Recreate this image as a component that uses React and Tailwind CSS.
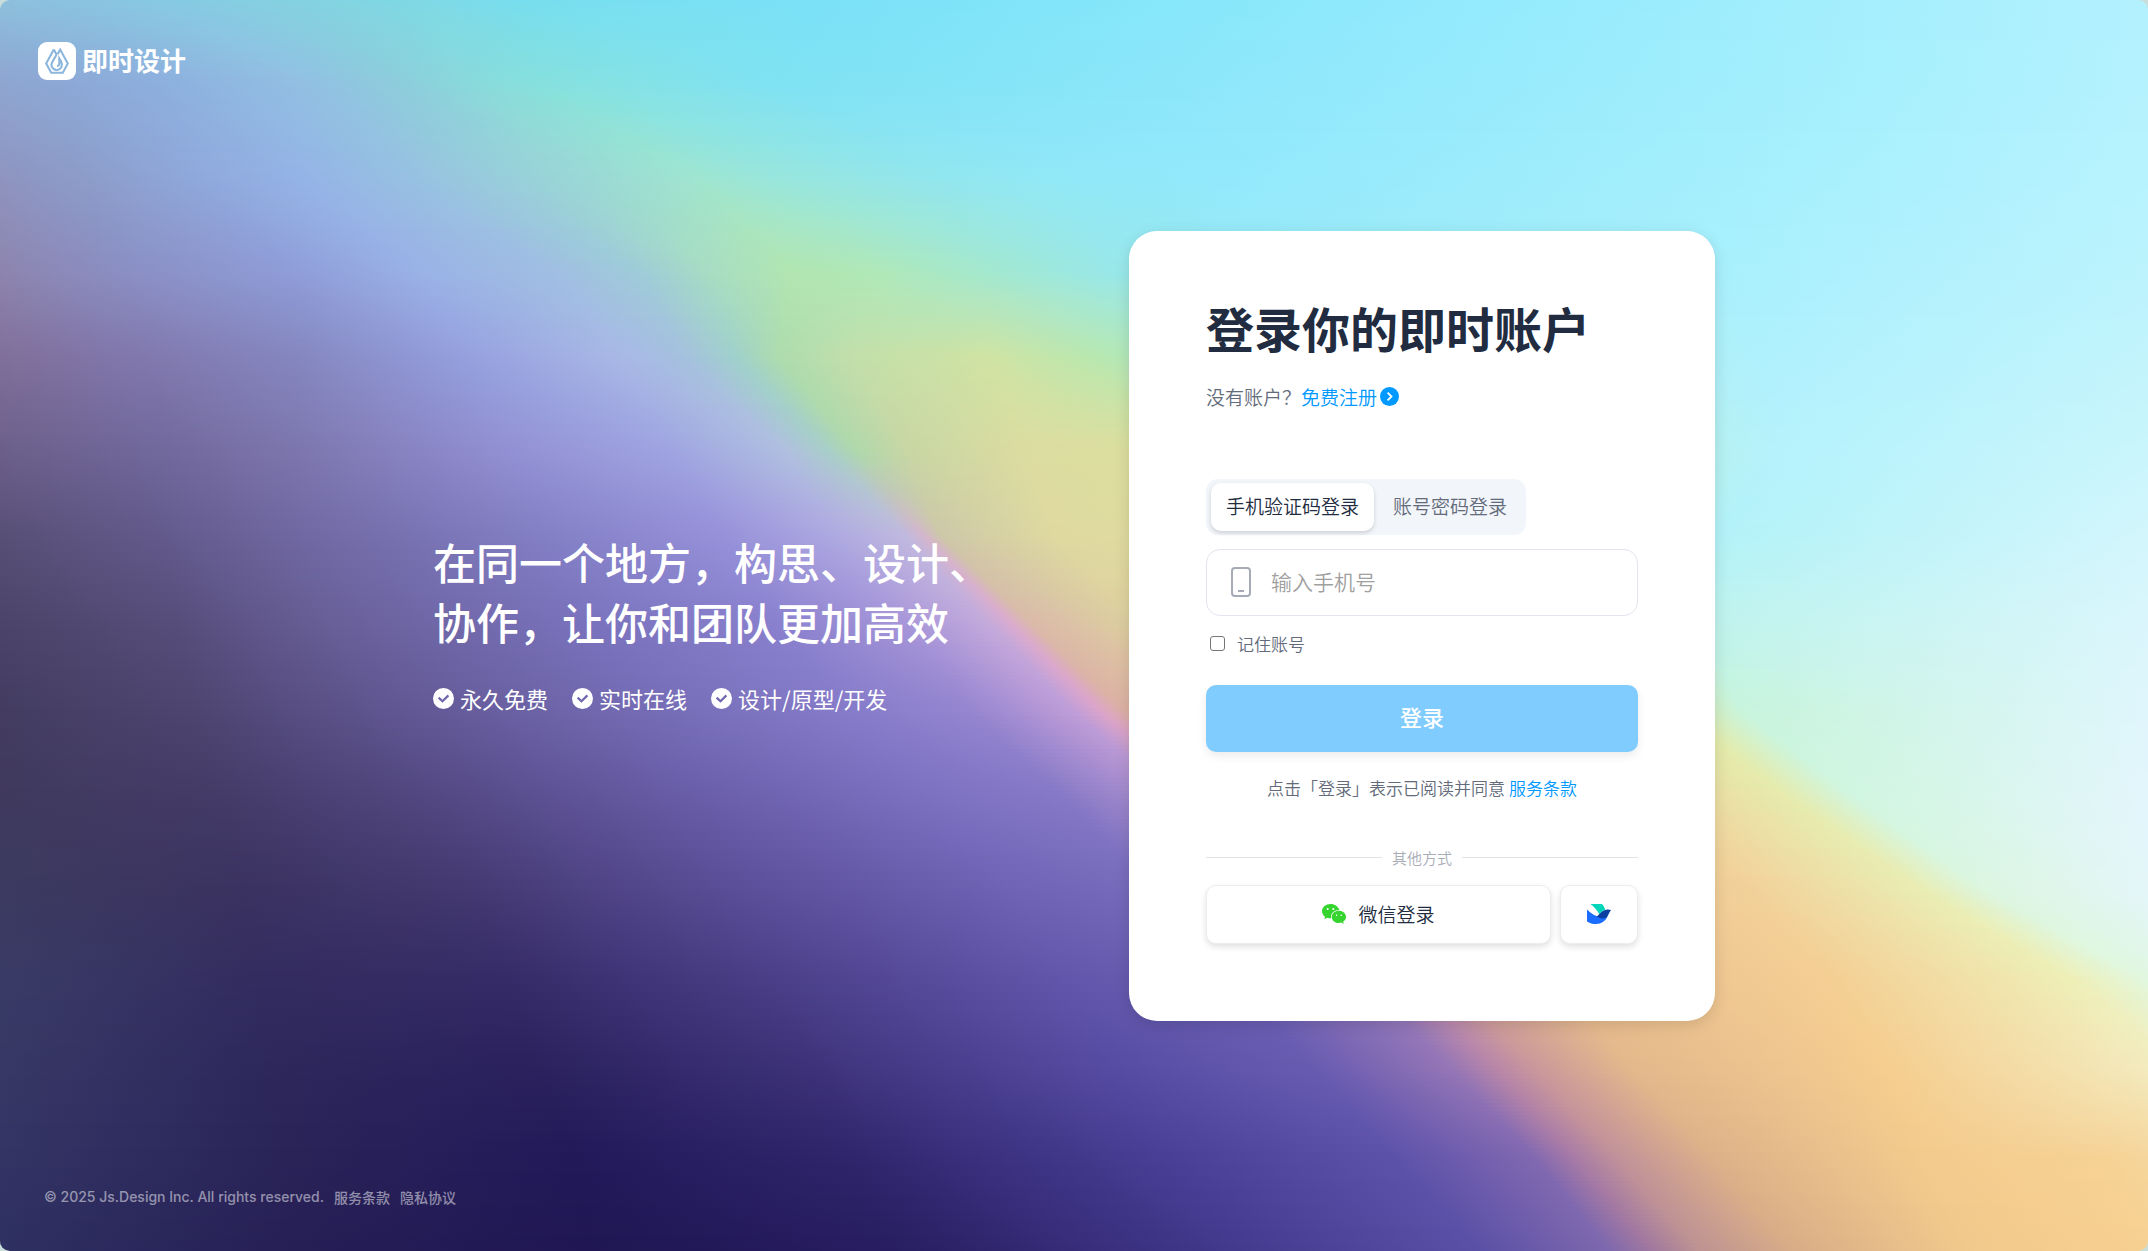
import React from "react";

/* Colour bands of the backdrop. Every row holds the same number of stops, so
   each stop traces a line through the picture from the top to the bottom. */
const ROWS = [
  [0, [[-60, "8fb9d8"], [0, "8dc0dc"], [60, "8ac4df"], [120, "86c9e2"], [190, "85cfe1"], [250, "82d4e2"], [310, "7ed9e5"], [380, "78dded"], [450, "78dff2"], [600, "7ae1f7"], [740, "81e4f9"], [880, "88e7fb"], [1250, "9dedfd"], [1568, "b3f1fe"]]],
  [60, [[-10, "8fa5d0"], [50, "8ca8d6"], [120, "8db0de"], [219, "92bfe3"], [258, "8fc6df"], [296, "8ccedb"], [340, "89d9db"], [390, "85e0dd"], [451, "84e2e5"], [567, "7fe2f3"], [700, "84e4f7"], [825, "8ae6fa"], [1260, "a0eefd"], [1568, "b4f2fe"]]],
  [130, [[0, "8e94bf"], [60, "8c9cc9"], [140, "8fa8db"], [219, "94b3e6"], [296, "97c0e2"], [373, "98cfda"], [451, "9bdcd4"], [509, "9fe5d0"], [567, "98e6dd"], [683, "92e6ee"], [790, "91e8f8"], [900, "93e9fb"], [1270, "a5effd"], [1568, "b7f3fe"]]],
  [200, [[0, "8d84ae"], [90, "8a8ec3"], [219, "8f9dd8"], [310, "9ab2e6"], [412, "a0bfe2"], [470, "9fccd8"], [520, "a8ddc2"], [580, "b2e5b0"], [644, "b0e8b8"], [721, "a4e8ce"], [810, "99e8e8"], [900, "98eaf6"], [1280, "aaf0fd"], [1568, "bcf3fd"]]],
  [260, [[0, "806f9a"], [110, "8179af"], [219, "8587c0"], [340, "95a0de"], [451, "a8b8e6"], [497, "a5c0df"], [536, "a0d0cc"], [567, "addcae"], [625, "c3dfaa"], [721, "cfe3a3"], [799, "b8e8b0"], [850, "aee8c4"], [1290, "aff1fd"], [1568, "c2f4fc"]]],
  [330, [[0, "6b5f8a"], [120, "71689c"], [219, "7d76ae"], [373, "9290d4"], [490, "9fa4e1"], [575, "b0bfe0"], [606, "a8cfc8"], [625, "aed8ac"], [663, "c8d6a4"], [750, "dcdca0"], [850, "dcdf9f"], [930, "c0e8b4"], [1300, "b5f2fc"], [1568, "caf5fc"]]],
  [390, [[0, "584f77"], [120, "635a8c"], [219, "7068a2"], [400, "8380c6"], [528, "9791da"], [605, "ada8e1"], [660, "c0b9df"], [674, "d4b6cc"], [686, "cdc8a8"], [770, "dfd9a0"], [920, "dfdd9f"], [1060, "cce8b0"], [1250, "b2f2f8"], [1568, "d2f6fc"]]],
  [455, [[0, "4b4369"], [130, "574d7b"], [240, "685f98"], [430, "7a72bd"], [570, "8a81ce"], [660, "a796d9"], [722, "c4aadb"], [738, "dbabcf"], [752, "dbb9aa"], [830, "ddd09f"], [1000, "e6d89f"], [1140, "dfe8a4"], [1240, "bff3ec"], [1568, "daf6fc"]]],
  [520, [[0, "433c60"], [140, "4d4470"], [280, "5f5590"], [460, "736ab3"], [620, "857bc9"], [710, "9585d0"], [785, "c09dd8"], [804, "dba4ca"], [822, "dcb0a4"], [910, "e4c89a"], [1120, "ecd59c"], [1225, "e2ebaa"], [1272, "c8f4dc"], [1568, "dff6fc"]]],
  [585, [[0, "3f395d"], [160, "433a67"], [320, "524781"], [500, "675ba6"], [680, "7b70c0"], [780, "8578c6"], [860, "b393d0"], [885, "d3a0bc"], [910, "dbae98"], [1000, "e8c294"], [1210, "f0d49c"], [1310, "e6ebae"], [1358, "d2f6e0"], [1568, "e3f6fc"]]],
  [650, [[0, "3c3a60"], [180, "3a3260"], [350, "443972"], [540, "5a4e99"], [740, "6e63b4"], [840, "776bbc"], [930, "a084c4"], [960, "c897b8"], [990, "d8a898"], [1080, "ebbf90"], [1280, "f2d199"], [1405, "e9edb4"], [1450, "dcf6e0"], [1580, "e5f6fb"]]],
  [715, [[0, "393b66"], [190, "332c5f"], [370, "352b67"], [570, "4b3f89"], [780, "6156ab"], [900, "6c60b4"], [995, "9078bc"], [1030, "bb8cb2"], [1060, "cf9f9a"], [1140, "e8bc8e"], [1340, "f4cf94"], [1515, "eeefb8"], [1565, "e2f7de"], [1660, "e5f6fb"]]],
  [780, [[0, "373865"], [200, "2d275c"], [390, "2a215d"], [590, "3d3279"], [820, "574ca4"], [960, "675bb1"], [1060, "9676b6"], [1092, "b886a8"], [1120, "c9979b"], [1190, "e3b88c"], [1380, "f5ce90"], [1580, "f3ecc0"], [1640, "e8f5d4"], [1740, "e5f6fb"]]],
  [845, [[0, "333464"], [210, "292358"], [420, "221959"], [620, "2f256c"], [860, "4a4098"], [1020, "5d52aa"], [1120, "8168b1"], [1150, "a87ba6"], [1180, "c0919a"], [1250, "dcb189"], [1400, "f3ca8d"], [1540, "f6d295"], [1660, "f4e0b0"], [1760, "f0f0c8"]]],
  [913, [[0, "2e3062"], [210, "261f56"], [430, "1f1653"], [650, "271d60"], [900, "43398d"], [1080, "5a50a6"], [1175, "7e68ae"], [1208, "a2799f"], [1240, "bd9292"], [1310, "d8ad87"], [1440, "f2c98c"], [1560, "f6d091"], [1690, "f5d8a0"], [1780, "f3ebc6"]]],
];

const STRIPS = 304;
const channels = (hex) => [0, 2, 4].map((i) => parseInt(hex.slice(i, i + 2), 16));

function stopsAt(y) {
  let i = 0;
  while (i < ROWS.length - 2 && y > ROWS[i + 1][0]) i += 1;
  const [y0, a] = ROWS[i];
  const [y1, b] = ROWS[i + 1];
  const t = (y - y0) / (y1 - y0);
  return a.map(([x, colour], k) => {
    const from = channels(colour);
    const to = channels(b[k][1]);
    const mix = from.map((v, c) => Math.round(v + (to[c] - v) * t));
    return { x: x + (b[k][0] - x) * t, colour: `rgb(${mix.join(",")})` };
  });
}

function Backdrop() {
  const height = 913 / STRIPS;
  const strips = Array.from({ length: STRIPS }, (_, i) => ({ y: i * height, stops: stopsAt((i + 0.5) * height) }));
  return (
    <svg className="absolute inset-0 h-full w-full" viewBox="0 0 1568 913" preserveAspectRatio="none" aria-hidden="true">
      <defs>
        {strips.map(({ stops }, i) => (
          <linearGradient key={i} id={`band-${i}`} gradientUnits="userSpaceOnUse" x1="-100" x2="1800" y1="0" y2="0">
            {stops.map((s, k) => (
              <stop key={k} offset={(s.x + 100) / 1900} stopColor={s.colour} />
            ))}
          </linearGradient>
        ))}
      </defs>
      {strips.map(({ y }, i) => (
        <rect key={i} x="0" y={y} width="1568" height={height + 1} fill={`url(#band-${i})`} />
      ))}
    </svg>
  );
}

function Logo() {
  return (
    <a href="#home" className="flex items-center gap-1.5 text-white">
      <svg className="size-[38px]" viewBox="0 0 38 38" aria-hidden="true">
        <rect width="38" height="38" rx="9" fill="#fff" />
        <g fill="none" stroke="#8bb6dd" strokeWidth="2.100" strokeLinejoin="miter">
          <path d="M15.800 7.600 8.200 21.600l5 9.200h11.600l5-9.200L22.200 7.600l-2.700 4.600" />
          <path d="M15.800 7.600l2.700 4.600" />
          <path d="M18.800 12.200 14 20.400a5.200 5.200 0 1 0 9.800 1.600c0-1.700-.9-3.300-2.500-5.600v5.300a2.200 2.200 0 0 1-2.300 2.300" />
        </g>
      </svg>
      <span className="pb-0.5 text-[26px] leading-9 font-bold">即时设计</span>
    </a>
  );
}

function Check() {
  return (
    <svg className="mt-0.5 size-[21px] shrink-0" viewBox="0 0 21 21" aria-hidden="true">
      <circle cx="10.500" cy="10.500" r="10.500" fill="#fff" />
      <path d="m5.600 9.600 3.900 3.700 5.900-5.900" fill="none" stroke="#6f67ae" strokeWidth="2.200" />
    </svg>
  );
}

function WeChat() {
  return (
    <svg className="h-5 w-6" viewBox="0 0 24 20" aria-hidden="true">
      <path fill="#35d42f" d="M8.500 0C3.800 0 0 3.200 0 7.200c0 2.200 1.200 4.200 3.100 5.500l-.8 2.500 2.900-1.500c1.100.4 2.200.6 3.400.6h.7a6 6 0 0 1-.2-1.500c0-3.700 3.500-6.700 7.600-6.700h.6C16.500 2.600 12.900 0 8.500 0z" />
      <path fill="#35d42f" d="M24 12.900c0-3.400-3.300-6.100-7.100-6.100-4 0-7.100 2.700-7.100 6.100S12.900 19 16.900 19c.8 0 1.700-.2 2.500-.4l2.300 1.300-.6-2.200c1.700-1.200 2.900-2.900 2.900-4.800z" />
      <g fill="#fff">
        <circle cx="5.700" cy="5" r="1" />
        <circle cx="11.300" cy="5" r="1" />
        <circle cx="14.600" cy="11.200" r=".8" />
        <circle cx="19.200" cy="11.200" r=".8" />
      </g>
    </svg>
  );
}

function Lark() {
  return (
    <svg className="h-5 w-6" viewBox="0 0 24 20" aria-hidden="true">
      <path fill="#00d6b9" d="M3.500 0h11.400c1.600 1.500 2.800 3.700 3.300 5.800-2.200.6-4 2.400-5.900 4.400C10.200 6.300 7.200 2.700 3.500 0z" />
      <path fill="#1a6dff" d="M0 5.600c4.300 4.300 9.500 7.400 15.500 8 2.200.1 3.800-.6 5.300-1.800C19 16.900 14.300 20 9 20c-3.500 0-6.600-1-9-2.600z" />
      <path fill="#0a3ea0" d="M24 6.100c-1.200 1.400-1.900 3.400-2.900 5.100-1.500 2.700-3.800 3.500-6.400 3.200-1.700-.3-3.300-.9-4.900-1.700 2.300-1.900 4.200-5.200 7.600-6.500 2.100-.8 4.400-.9 6.600-.1z" />
    </svg>
  );
}

function LoginCard() {
  return (
    <form
      className="w-[586px] shrink-0 rounded-[28px] bg-white px-[77px] pt-[66px] pb-[77px] font-[350] text-[#636b7b] shadow-[0_4px_16px_rgba(0,0,0,0.12)]"
      onSubmit={(e) => e.preventDefault()}
    >
      <h1 className="text-5xl leading-[60px] font-bold whitespace-nowrap text-[#222c40]">登录你的即时账户</h1>
      <p className="mt-[26px] flex items-center text-[19px] leading-7">
        没有账户？
        <a href="#register" className="flex items-center gap-[3px] text-[#0099ff]">
          免费注册
          <svg className="size-[19px]" viewBox="0 0 19 19" aria-hidden="true">
            <circle cx="9.500" cy="9.500" r="9.500" fill="#0099ff" />
            <path d="m7.600 5.600 3.900 3.900-3.900 3.900" fill="none" stroke="#fff" strokeWidth="1.800" />
          </svg>
        </a>
      </p>

      <div className="mt-[68px] flex h-14 w-fit rounded-xl bg-[#f2f5fa] px-[5px] py-1 text-[19px]">
        <button type="button" className="rounded-[10px] bg-white px-[15px] text-[#222c40] shadow-[0_2px_4px_rgba(0,0,0,0.16)]">
          手机验证码登录
        </button>
        <button type="button" className="pr-3.5 pl-[19px]">账号密码登录</button>
      </div>

      <label className="mt-3.5 flex h-[67px] items-center gap-5 rounded-[14px] border border-[#e4e3ef] pr-5 pl-6">
        <svg className="h-[30px] w-5 shrink-0" viewBox="0 0 20 30" aria-hidden="true">
          <rect x="1" y="1" width="18" height="28" rx="3" fill="none" stroke="#a7abb8" strokeWidth="2" />
          <path d="M7 24h6" stroke="#a7abb8" strokeWidth="2" />
        </svg>
        <input
          type="tel"
          aria-label="输入手机号"
          placeholder="输入手机号"
          className="min-w-0 flex-1 bg-transparent text-[21px] outline-none placeholder:text-[#9f9f9f]"
        />
      </label>

      <label className="mt-4 flex items-center gap-3 pl-1 text-[17px] leading-6">
        <input type="checkbox" className="size-[15px] appearance-none rounded-[3px] border border-[#767676] bg-white" />
        记住账号
      </label>

      <button type="submit" className="mt-[29px] h-[67px] w-full rounded-[10px] bg-[#80ccff] pb-1 text-[22px] font-medium text-white shadow-[0_4px_10px_rgba(0,0,0,0.08)]">
        登录
      </button>

      <p className="mt-6 text-center text-[17px] leading-6">
        点击「登录」表示已阅读并同意 <a href="#terms" className="text-[#0099ff]">服务条款</a>
      </p>

      <div className="mt-[46px] flex items-center gap-2.5 text-[15px] leading-6 text-[#a9adb8]">
        <hr className="flex-1 border-[#e2e3e6]" />
        其他方式
        <hr className="flex-1 border-[#e2e3e6]" />
      </div>

      <div className="mt-[15px] flex h-[59px] gap-[9px]">
        <button type="button" className="flex flex-1 items-center justify-center gap-3 rounded-[10px] border border-[#ededed] bg-white text-[19px] text-[#222c40] shadow-[0_3px_6px_rgba(0,0,0,0.12)]">
          <WeChat />
          微信登录
        </button>
        <button type="button" aria-label="飞书登录" className="flex w-[78px] items-center justify-center rounded-[10px] border border-[#ededed] bg-white shadow-[0_3px_6px_rgba(0,0,0,0.12)]">
          <Lark />
        </button>
      </div>
    </form>
  );
}

export default function App() {
  return (
    <div className="min-h-screen bg-[#c9deda] font-['Noto_Sans_CJK_SC',sans-serif]">
      <div className="relative isolate flex min-h-screen flex-col overflow-hidden rounded-[10px]">
        <Backdrop />
        <header className="relative flex h-[122px] items-center px-[38px]">
          <Logo />
        </header>

        <main className="relative mx-auto flex w-full max-w-[1282px] flex-1 items-center justify-between">
          <section className="pb-2 text-white">
            <h2 className="text-[43px] leading-[60px] font-medium">
              在同一个地方，构思、设计、
              <br />
              协作，让你和团队更加高效
            </h2>
            <ul className="mt-8 flex gap-6 text-[22px] leading-[30px]">
              {["永久免费", "实时在线", "设计/原型/开发"].map((text) => (
                <li key={text} className="flex items-center gap-1.5">
                  <Check />
                  {text}
                </li>
              ))}
            </ul>
          </section>
          <LoginCard />
        </main>

        <footer className="relative flex h-[122px] items-center gap-2.5 px-11 pt-3.5 text-sm font-medium text-white/50">
          <span className="font-['Inter',sans-serif]">© 2025 Js.Design Inc. All rights reserved.</span>
          <a href="#terms">服务条款</a>
          <a href="#privacy">隐私协议</a>
        </footer>
      </div>
    </div>
  );
}
